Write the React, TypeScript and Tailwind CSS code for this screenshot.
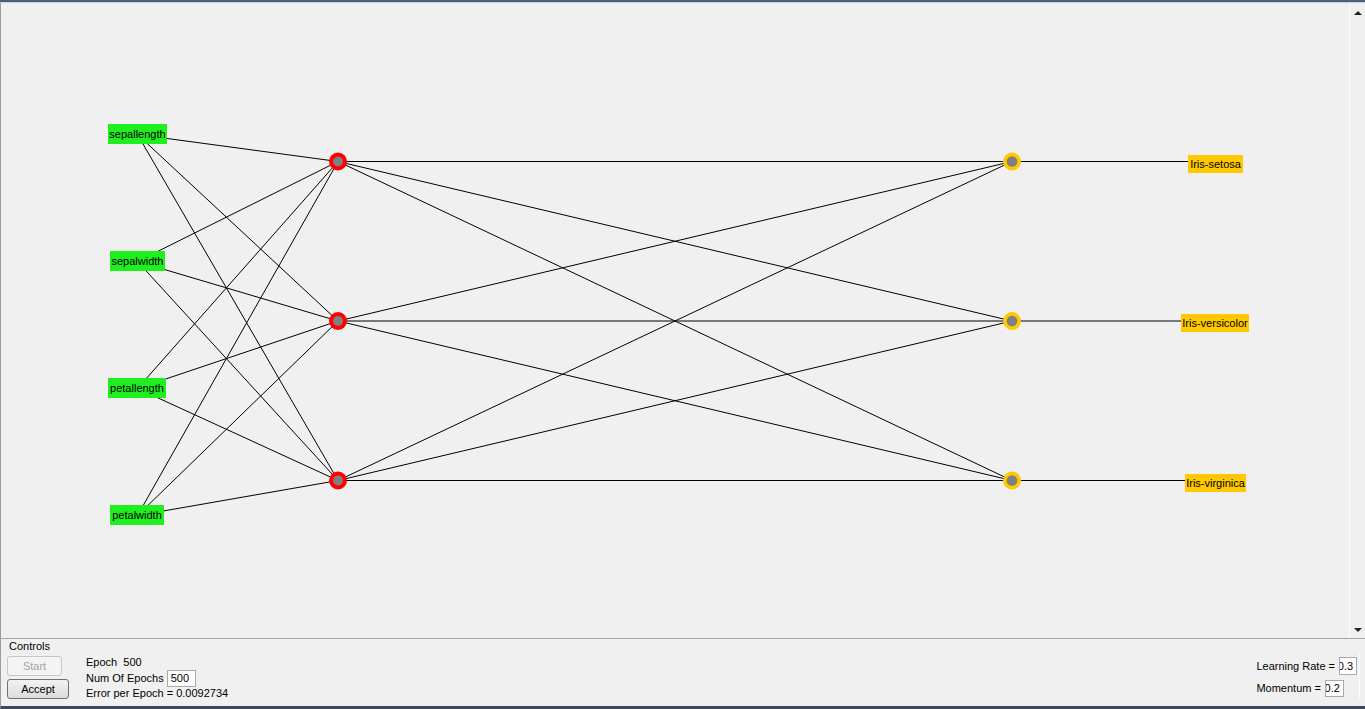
import React from 'react';

// canvas origin on the page: x=1, y=3
const OX = 1;
const OY = 3;

const inputs = [
  { name: 'sepallength', x: 108, y: 124, w: 59, cy: 134.5 },
  { name: 'sepalwidth', x: 110, y: 251, w: 55, cy: 261.5 },
  { name: 'petallength', x: 108, y: 378, w: 58, cy: 388.5 },
  { name: 'petalwidth', x: 110, y: 505, w: 54, cy: 515.5 },
];

const hidden = [161.5, 321, 480.5];
const outputs = [161.5, 321, 480.5];

const labels = [
  { name: 'Iris-setosa', x: 1188, y: 155, w: 55, cy: 163 },
  { name: 'Iris-versicolor', x: 1181, y: 314, w: 68, cy: 322 },
  { name: 'Iris-virginica', x: 1185, y: 474, w: 61, cy: 482 },
];

const HX = 338;
const OUTX = 1012;
const INX = 137.5;

function Network() {
  return (
    <div className="relative flex-1 h-full">
      <svg className="absolute inset-0" width="1348" height="635" viewBox={`${OX} ${OY} 1348 635`}>
        {inputs.map((n) =>
          hidden.map((hy, j) => (
            <line key={n.name + j} x1={INX} y1={n.cy} x2={HX} y2={hy} stroke="#000" strokeWidth="1" />
          ))
        )}
        {hidden.map((hy, i) =>
          outputs.map((oy, j) => (
            <line key={'h' + i + j} x1={HX} y1={hy} x2={OUTX} y2={oy} stroke="#000" strokeWidth="1" />
          ))
        )}
        {outputs.map((oy, i) => (
          <line key={'o' + i} x1={OUTX} y1={oy} x2={labels[i].x + 10} y2={oy} stroke="#000" strokeWidth="1" />
        ))}
        {hidden.map((hy, i) => (
          <g key={'hc' + i}>
            <circle cx={HX} cy={hy} r="9" fill="#ff0000" />
            <circle cx={HX} cy={hy} r="5" fill="#808080" />
          </g>
        ))}
        {outputs.map((oy, i) => (
          <g key={'oc' + i}>
            <circle cx={OUTX} cy={oy} r="9" fill="#ffc800" />
            <circle cx={OUTX} cy={oy} r="5.3" fill="#808080" />
          </g>
        ))}
      </svg>
      {inputs.map((n) => (
        <div
          key={n.name}
          className="absolute h-[20px] bg-[#1fee1f] text-black text-[11px] leading-[20px] flex items-center justify-center whitespace-nowrap"
          style={{ left: n.x - OX, top: n.y - OY, width: n.w }}
        >
          {n.name}
        </div>
      ))}
      {labels.map((n) => (
        <div
          key={n.name}
          className="absolute h-[18px] bg-[#ffc800] text-black text-[11px] leading-[18px] flex items-center justify-center whitespace-nowrap"
          style={{ left: n.x - OX, top: n.y - OY, width: n.w }}
        >
          {n.name}
        </div>
      ))}
    </div>
  );
}

function Scrollbar() {
  return (
    <div className="w-[16px] h-full border-l border-[#fbfbfb] flex flex-col items-center justify-between pt-[8px] pb-[6px]">
      <div className="w-0 h-0 border-l-[4px] border-r-[4px] border-b-[4px] border-l-transparent border-r-transparent border-b-[#222]" />
      <div className="w-0 h-0 border-l-[4px] border-r-[4px] border-t-[4px] border-l-transparent border-r-transparent border-t-[#222]" />
    </div>
  );
}

function Field({ value, w, h }: { value: string; w: number; h: number }) {
  return (
    <div
      className="bg-white border border-[#a9a9a9] flex items-center justify-end overflow-hidden whitespace-nowrap text-[11px] pr-[3px]"
      style={{ width: w, height: h }}
    >
      {value}
    </div>
  );
}

export default function App() {
  return (
    <div
      className="w-[1365px] h-[709px] bg-[#f0f0f0] flex flex-col overflow-hidden text-black"
      style={{ fontFamily: '"Liberation Sans", Arial, sans-serif' }}
    >
      <div className="h-[2px] bg-[#4e5e78]" />
      <div className="h-px bg-[#c9d0da]" />
      <div className="flex h-[635px] border-l border-[#9c9c9c]">
        <Network />
        <Scrollbar />
      </div>
      <div className="h-px bg-[#a5a5a5]" />
      <div className="flex-1 flex flex-col border-l border-[#9c9c9c] border-b-[3px] border-b-[#3d4b5e]">
        <div className="ml-[8px] mt-[1px] text-[11px] leading-[13px]">Controls</div>
        <div className="flex flex-1">
          <div className="ml-[6px] mt-[3px] flex flex-col gap-[3px]">
            <button className="w-[55px] h-[20px] rounded-[3px] border border-[#c6c6c6] bg-[#f4f4f4] text-[11px] text-[#a3a3a3]">
              Start
            </button>
            <button className="w-[62px] h-[20px] rounded-[3px] border border-[#707070] bg-gradient-to-b from-[#f2f2f2] to-[#dcdcdc] text-[11px]">
              Accept
            </button>
          </div>
          <div className="ml-[17px] mt-[2px] flex flex-col text-[11px]">
            <div className="leading-[14px]">Epoch&nbsp; 500</div>
            <div className="flex items-center gap-[3px] mt-[1px]">
              <span>Num Of Epochs</span>
              <div className="w-[29px] h-[17px] bg-white border border-[#a9a9a9] flex items-center pl-[3px]">500</div>
            </div>
            <div className="leading-[14px] mt-[-1px]">Error per Epoch = 0.0092734</div>
          </div>
          <div className="ml-auto mr-[2px] mt-[4px] flex flex-col gap-[5px] text-[11px]">
            <div className="flex items-center gap-[4px]">
              <span>Learning Rate =</span>
              <Field value="0.3" w={18} h={18} />
            </div>
            <div className="flex items-center gap-[4px]">
              <span>Momentum =</span>
              <Field value="0.2" w={19} h={17} />
            </div>
          </div>
          <div className="w-px bg-[#fbfbfb] mb-[6px]" />
          <div className="w-[5px]" />
        </div>
      </div>
    </div>
  );
}
